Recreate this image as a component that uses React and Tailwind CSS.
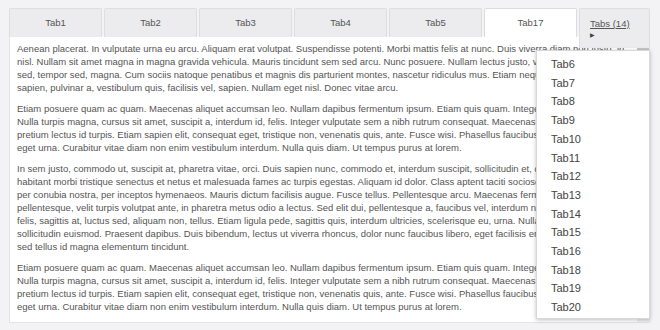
import { useState } from 'react'

const TABS = ['Tab1', 'Tab2', 'Tab3', 'Tab4', 'Tab5', 'Tab17']

const HIDDEN = [
  'Tab6', 'Tab7', 'Tab8', 'Tab9', 'Tab10', 'Tab11', 'Tab12',
  'Tab13', 'Tab14', 'Tab15', 'Tab16', 'Tab18', 'Tab19', 'Tab20',
]

const ETIAM = [
  'Etiam posuere quam ac quam. Maecenas aliquet accumsan leo. Nullam dapibus fermentum ipsum. Etiam quis quam. Integer lacinia. Nulla est.',
  'Nulla turpis magna, cursus sit amet, suscipit a, interdum id, felis. Integer vulputate sem a nibh rutrum consequat. Maecenas lorem. Pellentesque',
  'pretium lectus id turpis. Etiam sapien elit, consequat eget, tristique non, venenatis quis, ante. Fusce wisi. Phasellus faucibus molestie nisl. Fusce',
  'eget urna. Curabitur vitae diam non enim vestibulum interdum. Nulla quis diam. Ut tempus purus at lorem.',
]

// lines kept as-is so the wrap matches the screenshot
const PARAGRAPHS = [
  [
    'Aenean placerat. In vulputate urna eu arcu. Aliquam erat volutpat. Suspendisse potenti. Morbi mattis felis at nunc. Duis viverra diam non justo, in',
    'nisl. Nullam sit amet magna in magna gravida vehicula. Mauris tincidunt sem sed arcu. Nunc posuere. Nullam lectus justo, vulputate eget, mollis',
    'sed, tempor sed, magna. Cum sociis natoque penatibus et magnis dis parturient montes, nascetur ridiculus mus. Etiam neque. Curabitur ligula',
    'sapien, pulvinar a, vestibulum quis, facilisis vel, sapien. Nullam eget nisl. Donec vitae arcu.',
  ],
  ETIAM,
  [
    'In sem justo, commodo ut, suscipit at, pharetra vitae, orci. Duis sapien nunc, commodo et, interdum suscipit, sollicitudin et, dolor. Pellentesque',
    'habitant morbi tristique senectus et netus et malesuada fames ac turpis egestas. Aliquam id dolor. Class aptent taciti sociosqu ad litora torquent',
    'per conubia nostra, per inceptos hymenaeos. Mauris dictum facilisis augue. Fusce tellus. Pellentesque arcu. Maecenas fermentum, sem in pharetra',
    'pellentesque, velit turpis volutpat ante, in pharetra metus odio a lectus. Sed elit dui, pellentesque a, faucibus vel, interdum nec, diam. Mauris dui mi,',
    'felis, sagittis at, luctus sed, aliquam non, tellus. Etiam ligula pede, sagittis quis, interdum ultricies, scelerisque eu, urna. Nullam ut sapien. Vivamus',
    'sollicitudin euismod. Praesent dapibus. Duis bibendum, lectus ut viverra rhoncus, dolor nunc faucibus libero, eget facilisis enim ipsum id lacus. In hac',
    'sed tellus id magna elementum tincidunt.',
  ],
  ETIAM,
  [
    'Lorem ipsum dolor sit amet, consectetur adipisicing elit. Morbi ac nulla at ipsum lectus ultrices elit. Etiam dignissim fermentum mauris.',
  ],
]

export default function App() {
  const [active, setActive] = useState('Tab17')

  return (
    <div
      className="min-h-screen bg-[#f3f3f5] pl-[9px] pt-[8px] text-[#555]"
      style={{ fontFamily: '"Liberation Sans", Arial, sans-serif' }}
    >
      <div className="relative w-[641px]">
        <div className="relative z-10 flex h-[28px] items-start gap-[2px]">
          {TABS.map((t) => (
            <button
              key={t}
              type="button"
              onClick={() => setActive(t)}
              className={`flex h-[29px] w-[93px] items-center justify-center rounded-t-[2px] border border-b-0 text-[9.5px] ${
                active === t
                  ? 'border-[#dcdcde] bg-white'
                  : 'h-[28px] border-[#dedee0] bg-[#ececee]'
              }`}
            >
              {t}
            </button>
          ))}
          <div className="h-[40px] w-[71px] rounded-t-[2px] border border-b-0 border-[#dedee0] bg-[#ececee] pl-[10px] pt-[9px] text-[9.5px] leading-[11px]">
            <span className="underline">Tabs (14)</span>
            <div className="mt-[2px] text-[6px] leading-[8px] text-[#444]">▶</div>
          </div>
        </div>

        <div className="flex h-[287px] overflow-hidden border border-t-0 border-[#e4e4e6] bg-white">
          <div className="min-w-0 flex-1 overflow-hidden pl-[7px] pt-[6px] text-[9.5px] leading-[13px]">
            {PARAGRAPHS.map((lines, i) => (
              <p key={i} className="mb-[8px]">
                {lines.map((l, j) => (
                  <span key={j} className="block whitespace-nowrap">
                    {l}
                  </span>
                ))}
              </p>
            ))}
          </div>
          <div className="w-[12px] shrink-0 bg-[#f0f0f0]">
            <div className="mt-[10px] h-[120px] bg-[#c6c6c6]" />
          </div>
        </div>

        <div className="absolute left-[527px] top-[42px] z-20 w-[114px] border border-[#d8d8d8] bg-white pb-[1px] pt-[4px] shadow-[0_1px_4px_rgba(0,0,0,0.25)]">
          {HIDDEN.map((t) => (
            <div
              key={t}
              className="flex h-[18.7px] items-center pl-[14px] text-[11px] text-[#444]"
            >
              {t}
            </div>
          ))}
        </div>
      </div>
    </div>
  )
}
